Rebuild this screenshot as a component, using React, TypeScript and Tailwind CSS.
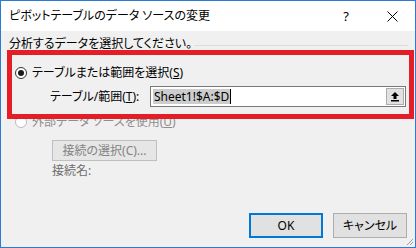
import React from "react";

const ui = "font-['Noto_Sans','Noto_Sans_CJK_JP',sans-serif] [font-feature-settings:'palt']";

export default function App() {
  return (
    <div className={`relative flex h-[248px] w-[416px] flex-col border border-[#2b7bd4] bg-[#f0f0f0] text-[12px] leading-none text-black ${ui}`}>
      <TitleBar />

      <div className="flex flex-1 flex-col">
        <div className="mt-[5px] flex h-[16px] items-center pl-[8px] pr-[7px]">
          <span className="whitespace-nowrap">分析するデータを選択してください。</span>
          <div className="ml-[2px] mt-[3px] h-px flex-1 bg-[#dcdcdc]" />
        </div>

        <div className="mt-[11px] flex h-[20px] items-center pl-[14px]">
          <Radio checked />
          <span className="ml-[5px] whitespace-nowrap">
            テーブルまたは範囲を選択(<u>S</u>)
          </span>
        </div>

        <div className="mt-[3px] flex h-[21px] items-center">
          <span className="ml-[49px] w-[92px] whitespace-nowrap">
            テーブル/範囲(<u>T</u>):
          </span>
          <div className="ml-[8px] flex h-[21px] w-[256px] items-center border border-[#7a7a7a] bg-white pl-[2px] pr-[1px]">
            <span className="bg-[#cdcdcd] px-px leading-[15px]">Sheet1!$A:$D</span>
            <span className="h-[15px] w-px bg-black" />
            <div className="flex-1" />
            <div className="flex h-[17px] w-[18px] items-center justify-center border border-[#adadad] bg-[#e1e1e1]">
              <svg width="10" height="11" viewBox="0 0 10 11">
                <path d="M5 1 L1 5 H3.5 V8 H6.5 V5 H9 Z" fill="#000" />
                <rect x="1" y="9" width="8" height="1.5" fill="#000" />
              </svg>
            </div>
          </div>
        </div>

        <div className="mt-[7px] flex h-[16px] items-center pl-[14px] text-[#8d8d8d]">
          <Radio disabled />
          <span className="ml-[5px] whitespace-nowrap">
            外部データ ソースを使用(<u>U</u>)
          </span>
        </div>

        <div className="mt-[10px] pl-[51px]">
          <div className="flex h-[21px] w-[105px] items-center justify-center border border-[#bfbfbf] bg-[#e6e6e6] text-[#838383]">
            接続の選択(C)...
          </div>
        </div>

        <div className="mt-[2px] flex h-[16px] items-center pl-[51px] text-[#6d6d6d]">接続名:</div>

        <div className="mt-auto mb-[9px] flex justify-end gap-[10px] pr-[8px]">
          <button className="flex h-[25px] w-[74px] items-center justify-center border-2 border-[#0078d7] bg-[#e1e1e1]">
            OK
          </button>
          <button className="flex h-[25px] w-[74px] items-center justify-center border border-[#adadad] bg-[#e1e1e1]">
            キャンセル
          </button>
        </div>
      </div>

      {/* annotation frame over the first option */}
      <div className="pointer-events-none absolute left-[6px] top-[49px] h-[69px] w-[407px] border-[5px] border-[#e41e26]" />

      <svg className="absolute bottom-[1px] right-[1px]" width="10" height="10" viewBox="0 0 10 10">
        <path d="M9 3 L3 9 M9 6 L6 9" stroke="#a0a0a0" strokeWidth="1" />
      </svg>
    </div>
  );
}

function TitleBar() {
  return (
    <div className="flex h-[30px] items-center bg-white pl-[8px]">
      <span className="whitespace-nowrap text-[12px]">ピボットテーブルのデータ ソースの変更</span>
      <div className="flex-1" />
      <span className="mr-[38px] text-[13px]">?</span>
      <svg className="mr-[17px]" width="11" height="11" viewBox="0 0 11 11">
        <path d="M0.5 0.5 L10.5 10.5 M10.5 0.5 L0.5 10.5" stroke="#000" strokeWidth="1" />
      </svg>
    </div>
  );
}

function Radio({ checked, disabled }: { checked?: boolean; disabled?: boolean }) {
  return (
    <span
      className={`flex h-[12px] w-[12px] items-center justify-center rounded-full border bg-white ${
        disabled ? "border-[#bcbcbc]" : "border-[#333333]"
      }`}
    >
      {checked ? <span className="h-[6px] w-[6px] rounded-full bg-[#1a1a1a]" /> : null}
    </span>
  );
}
